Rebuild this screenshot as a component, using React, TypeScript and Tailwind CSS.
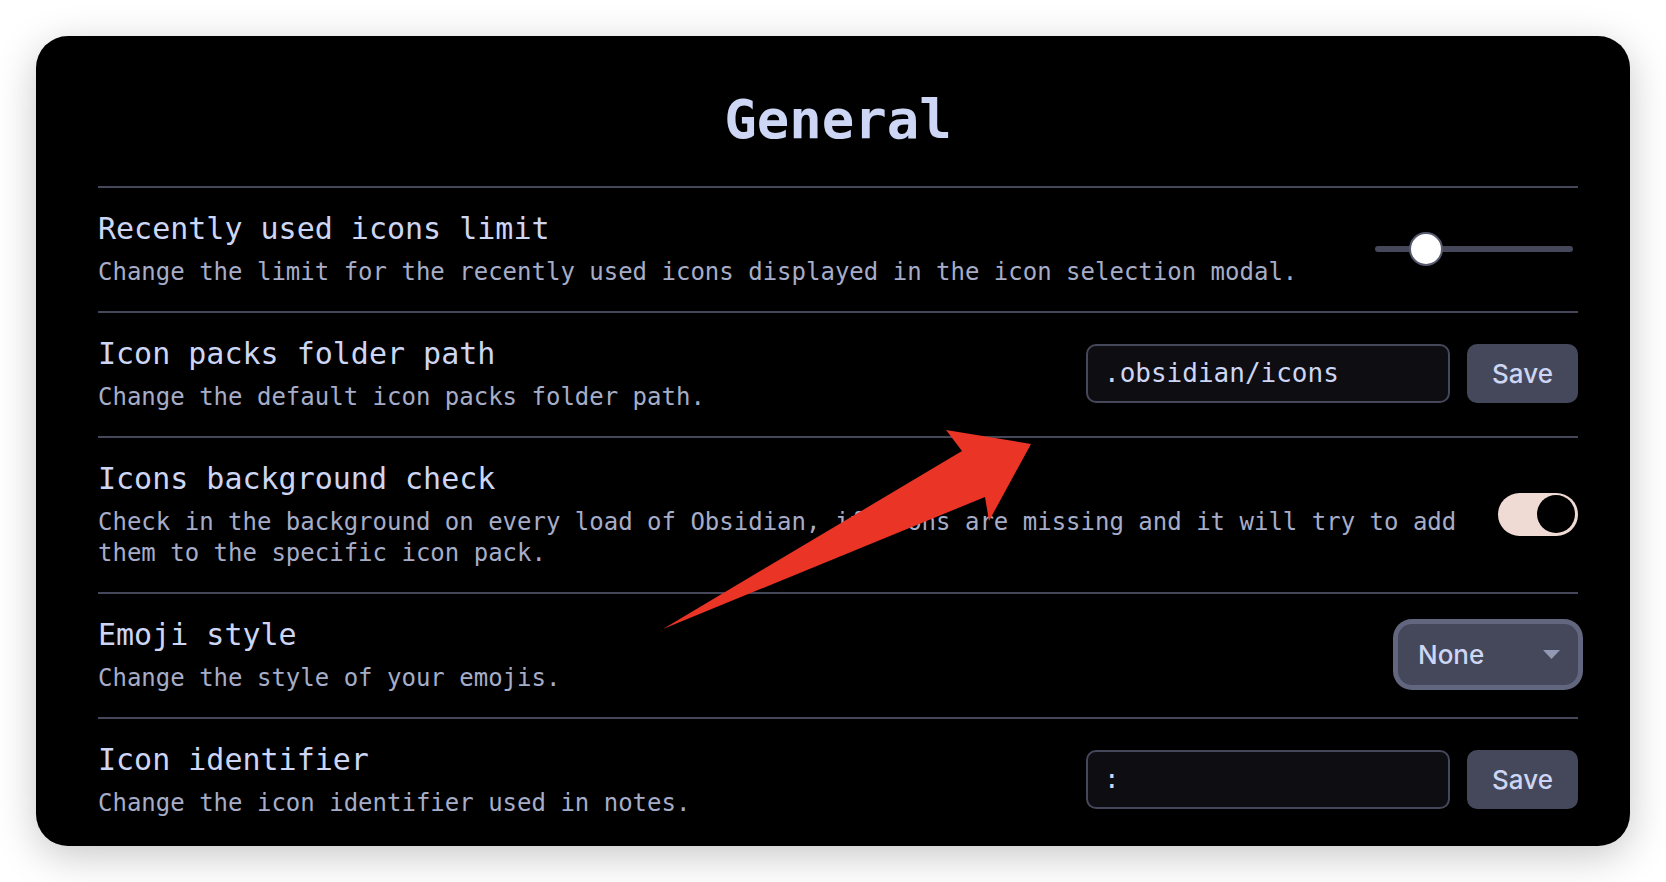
import React from "react";

function Row({
  name,
  desc,
  children,
}: {
  name: string;
  desc: React.ReactNode;
  children: React.ReactNode;
}) {
  return (
    <div className="flex items-center border-t-2 border-[#45475a] pt-[21px] pb-[23px]">
      <div className="flex-1 mr-[32px]">
        <div className="text-[30px] leading-[39px] text-[#cdd6f4]">{name}</div>
        <div className="pt-[9px] text-[24px] leading-[31px] text-[#a6adc8]">{desc}</div>
      </div>
      <div className="flex items-center gap-[17px] shrink-0">{children}</div>
    </div>
  );
}

function TextInput({ value }: { value: string }) {
  return (
    <div className="w-[364px] h-[59px] rounded-[10px] border-2 border-[#45475a] bg-[#0d0d12] px-[16px] flex items-center text-[26px] text-[#cdd6f4]">
      {value}
    </div>
  );
}

function SaveButton() {
  return (
    <div className="w-[111px] h-[59px] rounded-[10px] bg-[#45475a] flex items-center justify-center font-['Inter',sans-serif] font-medium text-[26px] text-[#cdd6f4]">
      Save
    </div>
  );
}

export default function App() {
  return (
    <div className="relative w-[1666px] h-[882px] bg-white overflow-hidden font-['DejaVu_Sans_Mono',monospace]">
      <div className="pt-[36px] pl-[36px]">
        <div className="w-[1594px] h-[810px] rounded-[32px] bg-black shadow-[0_10px_40px_rgba(0,0,0,0.22)] pl-[62px] pr-[52px] overflow-hidden">
          <div className="pt-[56px] pb-[38px] text-center text-[54px] leading-[56px] font-bold text-[#cdd6f4]">
            General
          </div>

          <Row
            name="Recently used icons limit"
            desc="Change the limit for the recently used icons displayed in the icon selection modal."
          >
            <div className="relative w-[198px] h-[36px] mr-[5px] flex items-center">
              <div className="w-full h-[6px] rounded-full bg-[#45475a]" />
              <div className="absolute left-[34px] top-[1px] w-[34px] h-[34px] rounded-full bg-white border-2 border-[#585b70]" />
            </div>
          </Row>

          <Row
            name="Icon packs folder path"
            desc="Change the default icon packs folder path."
          >
            <TextInput value=".obsidian/icons" />
            <SaveButton />
          </Row>

          <Row
            name="Icons background check"
            desc="Check in the background on every load of Obsidian, if icons are missing and it will try to add them to the specific icon pack."
          >
            <div className="w-[80px] h-[43px] rounded-full bg-[#f0dad4] flex items-center justify-end pr-[3px]">
              <div className="w-[38px] h-[38px] rounded-full bg-black" />
            </div>
          </Row>

          <Row name="Emoji style" desc="Change the style of your emojis.">
            <div className="w-[180px] h-[61px] rounded-[14px] bg-[#45475a] shadow-[0_0_0_5px_#62667e] pl-[20px] pr-[18px] flex items-center justify-between font-['Inter',sans-serif] font-medium text-[26px] text-[#cdd6f4]">
              <span>None</span>
              <svg width="17" height="9" viewBox="0 0 17 9">
                <polygon points="0,0 17,0 8.5,9" fill="#9399b2" />
              </svg>
            </div>
          </Row>

          <Row name="Icon identifier" desc="Change the icon identifier used in notes.">
            <TextInput value=":" />
            <SaveButton />
          </Row>
        </div>
      </div>

      <svg
        className="absolute left-0 top-0 pointer-events-none"
        width="1666"
        height="882"
        viewBox="0 0 1666 882"
      >
        <polygon
          points="663,629 962,451 946,430 1031,444 989,521 985,497"
          fill="#e93426"
        />
      </svg>
    </div>
  );
}
